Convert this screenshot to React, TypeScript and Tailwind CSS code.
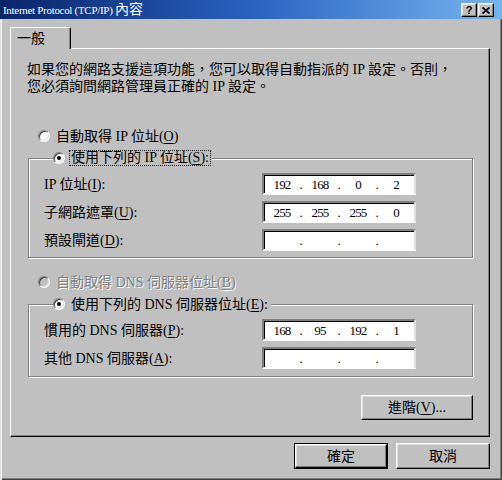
import React from "react";

const raised =
  "bg-[#c0c0c0] border border-t-white border-l-white border-r-black border-b-black shadow-[inset_-1px_-1px_0_#808080,inset_1px_1px_0_#dfdfdf]";

function Radio({ checked, disabled }: { checked?: boolean; disabled?: boolean }) {
  return (
    <span
      className={`w-[12px] h-[12px] rounded-full flex items-center justify-center shrink-0 border border-t-[#808080] border-l-[#808080] border-b-white border-r-white shadow-[inset_1px_1px_0_#404040,inset_-1px_-1px_0_#dfdfdf] ${
        disabled ? "bg-[#c0c0c0]" : "bg-white"
      }`}
    >
      {checked && <span className="w-[4px] h-[4px] rounded-full bg-black" />}
    </span>
  );
}

function U({ c }: { c: string }) {
  return <span className="underline underline-offset-2">{c}</span>;
}

function IpField({ v }: { v?: string[] }) {
  const vals = v ?? ["", "", "", ""];
  return (
    <div className="w-[154px] h-[22px] bg-white flex items-center pl-[1px] border-2 border-t-[#808080] border-l-[#808080] border-b-white border-r-[#dfdfdf] shadow-[inset_1px_1px_0_#000]">
      {vals.map((x, i) => (
        <React.Fragment key={i}>
          <span className="w-[34px] text-center text-[13px] tracking-[-0.8px] leading-none">{x}</span>
          {i < 3 && <span className="w-[4px] text-center text-[13px] leading-none">.</span>}
        </React.Fragment>
      ))}
    </div>
  );
}

function Row({ label, v }: { label: React.ReactNode; v?: string[] }) {
  return (
    <div className="flex items-center h-[22px]">
      <span className="w-[218px] whitespace-nowrap">{label}</span>
      <IpField v={v} />
    </div>
  );
}

export default function App() {
  return (
    <div className="w-[502px] h-[480px] bg-[#c0c0c0] flex flex-col text-black text-[14px] font-['Liberation_Serif','Noto_Sans_CJK_TC',serif] shadow-[inset_1px_0_0_#dfdfdf,inset_2px_0_0_#fff,inset_-1px_-1px_0_#404040,inset_-2px_-2px_0_#808080] overflow-hidden">
      {/* title bar */}
      <div className="h-[19px] flex items-center pl-[3px] pr-[8px] bg-linear-to-r from-[#0a246a] via-[#2a62c0] to-[#76b4ee]">
        <span className="text-white text-[11px] tracking-[-0.3px] whitespace-nowrap leading-none">
          Internet Protocol (TCP/IP) <span className="text-[14px] tracking-normal">內容</span>
        </span>
        <div className="ml-auto flex gap-[1px] mt-[1px]">
          <div className={`w-[16px] h-[14px] flex items-center justify-center ${raised}`}>
            <span className="font-['Liberation_Sans',sans-serif] font-bold text-[11px] leading-none">?</span>
          </div>
          <div className={`w-[16px] h-[14px] flex items-center justify-center ${raised}`}>
            <svg width="8" height="7" viewBox="0 0 8 7">
              <path d="M0.5 0.5 L7.5 6.5 M7.5 0.5 L0.5 6.5" stroke="#000" strokeWidth="1.8" />
            </svg>
          </div>
        </div>
      </div>

      <div className="flex flex-col px-[10px] pt-[8px]">
        {/* tab strip */}
        <div className="flex h-[21px]">
          <div className="relative z-10 w-[61px] h-[22px] -mb-px bg-[#c0c0c0] border-t border-l border-white border-r border-r-black rounded-t-[2px] shadow-[inset_-1px_0_0_#808080] pl-[6px] pt-[2px] leading-[18px]">
            一般
          </div>
        </div>

        {/* panel */}
        <div className="w-[480px] h-[389px] border border-t-white border-l-white border-r-black border-b-black shadow-[inset_-1px_-1px_0_#808080] flex flex-col px-[16px]">
          <div className="mt-[12px] leading-[17px] whitespace-nowrap">
            <div>如果您的網路支援這項功能，您可以取得自動指派的 IP 設定。否則，</div>
            <div>您必須詢問網路管理員正確的 IP 設定。</div>
          </div>

          <div className="mt-[33px] h-[16px] flex items-center pl-[11px] gap-[6px] whitespace-nowrap">
            <Radio />
            <span>
              自動取得 IP 位址(<U c="O" />)
            </span>
          </div>

          <fieldset className="mt-[6px] ml-[1px] border border-[#808080] shadow-[inset_1px_1px_0_#fff,1px_1px_0_#fff] pl-[15px] pt-[7px] pb-[6px] flex flex-col gap-[6px]">
            <legend className="ml-[9px] h-[16px] flex items-center gap-[4px] bg-[#c0c0c0] pr-[1px] whitespace-nowrap">
              <Radio checked />
              <span className="border border-dotted border-black px-[1px] leading-[14px]">
                使用下列的 IP 位址(<U c="S" />):
              </span>
            </legend>
            <Row label={<>IP 位址(<U c="I" />):</>} v={["192", "168", "0", "2"]} />
            <Row label={<>子網路遮罩(<U c="U" />):</>} v={["255", "255", "255", "0"]} />
            <Row label={<>預設閘道(<U c="D" />):</>} />
          </fieldset>

          <div className="mt-[16px] h-[16px] flex items-center pl-[11px] gap-[6px] whitespace-nowrap">
            <Radio disabled />
            <span className="text-[#808080] [text-shadow:1px_1px_0_#fff]">
              自動取得 DNS 伺服器位址(<U c="B" />)
            </span>
          </div>

          <fieldset className="mt-[6px] ml-[1px] border border-[#808080] shadow-[inset_1px_1px_0_#fff,1px_1px_0_#fff] pl-[15px] pt-[7px] pb-[7px] flex flex-col gap-[6px]">
            <legend className="ml-[9px] h-[16px] flex items-center gap-[6px] bg-[#c0c0c0] pr-[3px] whitespace-nowrap">
              <Radio checked />
              <span>
                使用下列的 DNS 伺服器位址(<U c="E" />):
              </span>
            </legend>
            <Row label={<>慣用的 DNS 伺服器(<U c="P" />):</>} v={["168", "95", "192", "1"]} />
            <Row label={<>其他 DNS 伺服器(<U c="A" />):</>} />
          </fieldset>

          <div className="mt-[18px] ml-[1px] flex justify-end">
            <button className={`w-[112px] h-[25px] flex items-center justify-center ${raised}`}>
              進階(<U c="V" />)...
            </button>
          </div>
        </div>

        {/* bottom buttons */}
        <div className="w-[480px] mt-[6px] flex justify-end gap-[8px]">
          <div className="w-[94px] h-[26px] border border-black flex">
            <button className={`flex-1 flex items-center justify-center ${raised}`}>確定</button>
          </div>
          <button className={`w-[94px] h-[26px] flex items-center justify-center ${raised}`}>取消</button>
        </div>
      </div>
    </div>
  );
}
